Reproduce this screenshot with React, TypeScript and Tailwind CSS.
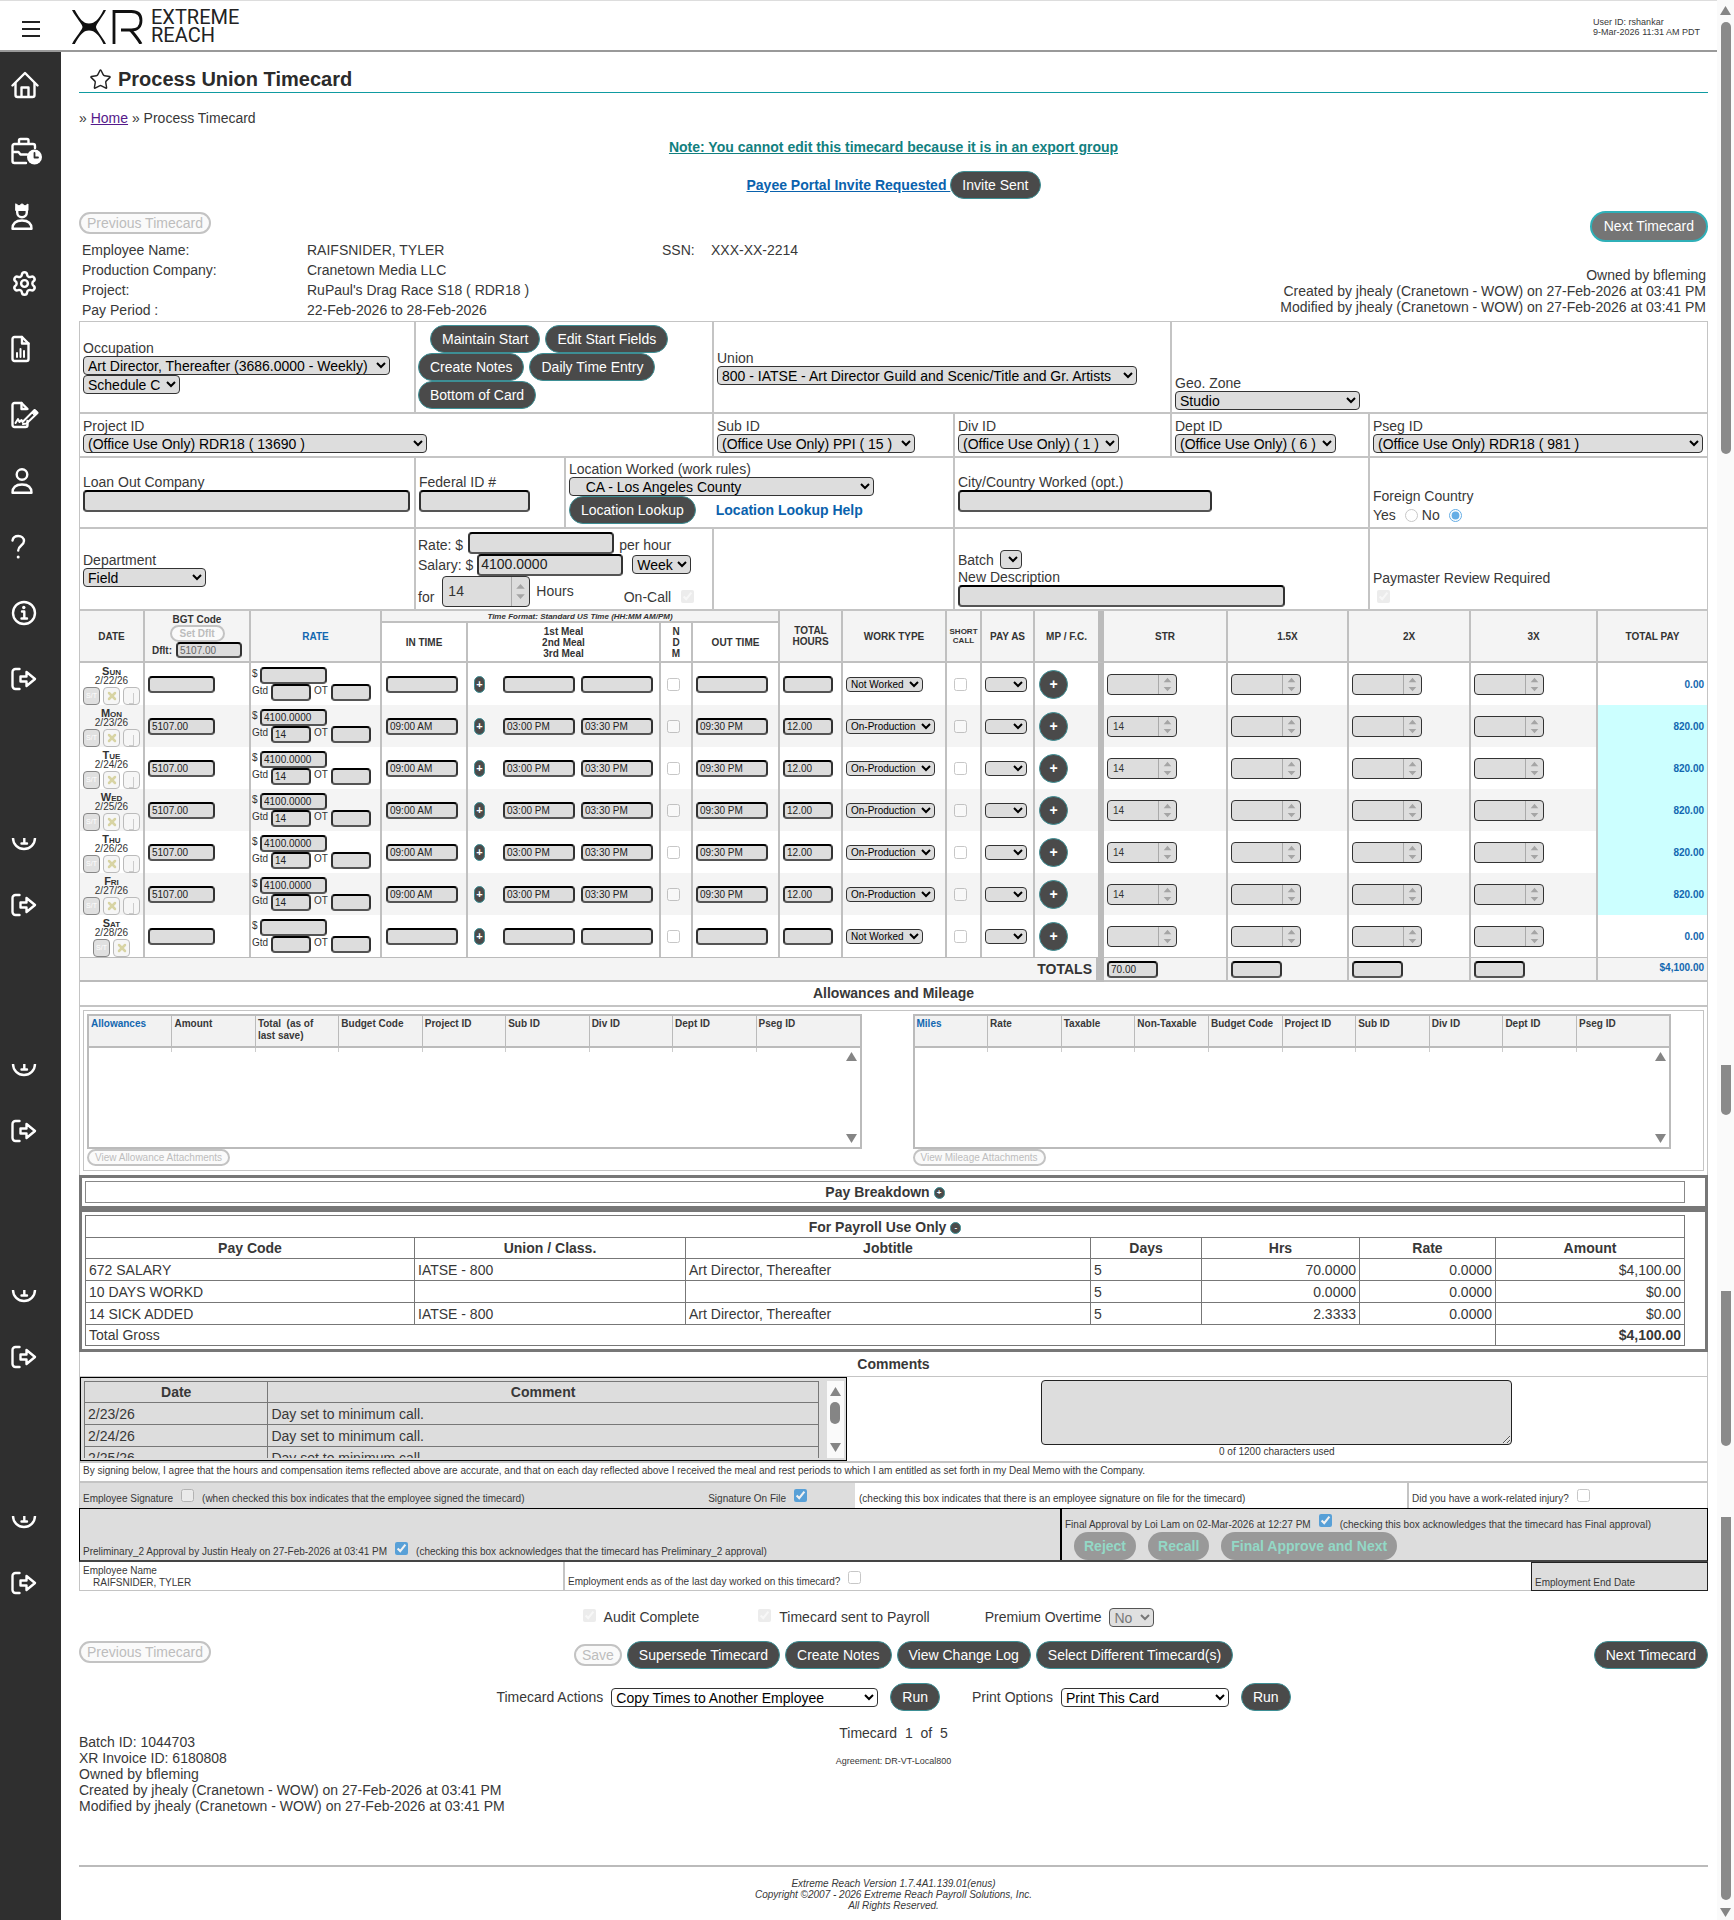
import type { ReactNode } from "react";
import { twMerge } from "tailwind-merge";
import { Settings, Star, X } from "lucide-react";

const days = [
  { name: "Sun", date: "2/22/26", worked: false },
  { name: "Mon", date: "2/23/26", worked: true },
  { name: "Tue", date: "2/24/26", worked: true },
  { name: "Wed", date: "2/25/26", worked: true },
  { name: "Thu", date: "2/26/26", worked: true },
  { name: "Fri", date: "2/27/26", worked: true },
  { name: "Sat", date: "2/28/26", worked: false },
];

const payRows = [
  ["672 SALARY", "IATSE - 800", "Art Director, Thereafter", "5", "70.0000", "0.0000", "$4,100.00"],
  ["10 DAYS WORKD", "", "", "5", "0.0000", "0.0000", "$0.00"],
  ["14 SICK ADDED", "IATSE - 800", "Art Director, Thereafter", "5", "2.3333", "0.0000", "$0.00"],
];

const comments = [
  { date: "2/23/26", text: "Day set to minimum call." },
  { date: "2/24/26", text: "Day set to minimum call." },
  { date: "2/25/26", text: "Day set to minimum call." },
];

const allowanceCols = [
  "Allowances",
  "Amount",
  "Total\u00a0 (as of\nlast save)",
  "Budget Code",
  "Project ID",
  "Sub ID",
  "Div ID",
  "Dept ID",
  "Pseg ID",
];

const mileageCols = [
  "Miles",
  "Rate",
  "Taxable",
  "Non-Taxable",
  "Budget Code",
  "Project ID",
  "Sub ID",
  "Div ID",
  "Dept ID",
  "Pseg ID",
];

/* ---------- icons ---------- */

function Icon({ children, width = 28 }: { children: ReactNode; width?: number }) {
  return (
    <svg
      width={width}
      height="28"
      viewBox={`0 0 ${width} 28`}
      fill="none"
      stroke="white"
      strokeWidth="2.4"
      strokeLinecap="round"
      strokeLinejoin="round"
      aria-hidden="true"
    >
      {children}
    </svg>
  );
}

function HomeIcon() {
  return (
    <Icon>
      <path d="M1.500 14.500 14 2l12.500 12.500" />
      <path d="M4.500 12.500v11.500a2 2 0 0 0 2 2h15a2 2 0 0 0 2-2V12.500" />
      <path d="M10.500 25.500v-9h7v9" />
    </Icon>
  );
}

function BriefcaseIcon() {
  return (
    <Icon width={32}>
      <path d="M24 11V9a2 2 0 0 0-2-2H3.500a2 2 0 0 0-2 2v15a2 2 0 0 0 2 2H15" />
      <path d="M8 6.500V3.500a1.500 1.500 0 0 1 1.500-1.500h6.500a1.500 1.500 0 0 1 1.500 1.500v3" />
      <path d="M2 15h5.500l2 2.500H16" />
      <circle cx="23.500" cy="20" r="7.500" fill="white" stroke="none" />
      <path d="M23.500 16v4.500h3.500" stroke="#2f2f2f" strokeWidth="1.800" />
    </Icon>
  );
}

function CrownUserIcon() {
  return (
    <Icon width={24}>
      <path d="M5 1l3 2 3-2.200 3 2.200 3-2v6.500H5z" fill="white" strokeWidth="1" />
      <path d="M6.200 6.500V9.500a4.800 4.800 0 0 0 9.600 0V6.500" />
      <path d="M1.500 25.800c0-5.500 3.500-8.300 9.500-8.300s9.500 2.800 9.500 8.300z" />
    </Icon>
  );
}

function ReportIcon() {
  return (
    <Icon width={24}>
      <path d="M1.500 4a2 2 0 0 1 2-2H11l6.500 6.500V24a2 2 0 0 1-2 2h-12a2 2 0 0 1-2-2z" />
      <path d="M11 2v6.500h6.500" />
      <path d="M6 22v-4M9.500 22v-8M13 22v-6" strokeWidth="2" />
    </Icon>
  );
}

function SignIcon() {
  return (
    <Icon width={30}>
      <path d="M16.500 20v4a2 2 0 0 1-2 2h-11a2 2 0 0 1-2-2V4a2 2 0 0 1 2-2h7l6 6" />
      <path d="M10.500 2v6h5" />
      <path d="M4.500 22l2.500-4 1.500 3 2-2 1 2 12-12 3 3-11 10.500-3.500.5" strokeWidth="2" />
      <path d="m21 11.500 3-3 3 3-3 3z" fill="white" strokeWidth="1" />
    </Icon>
  );
}

function UserIcon() {
  return (
    <Icon width={24}>
      <circle cx="11" cy="7.500" r="5.300" />
      <path d="M1.500 25.800c0-5.500 3.500-8.300 9.500-8.300s9.500 2.800 9.500 8.300z" />
    </Icon>
  );
}

function HelpIcon() {
  return (
    <Icon width={16}>
      <path d="M1.500 7.500C2 4.500 4.300 3 7.300 3c3.200 0 5.700 2 5.700 5 0 4.500-5.800 4.500-5.800 9.500" />
      <circle cx="7.200" cy="24" r="1.500" fill="white" stroke="none" />
    </Icon>
  );
}

function InfoIcon() {
  return (
    <Icon width={26}>
      <circle cx="13" cy="14" r="11" />
      <path d="M11 12.500h2.300V19M10.500 19.500h5.500" />
      <circle cx="12.800" cy="8.500" r="1.700" fill="white" stroke="none" />
    </Icon>
  );
}

function LogoutIcon() {
  return (
    <Icon width={28}>
      <path d="M8.500 4H4.500a3 3 0 0 0-3 3v14a3 3 0 0 0 3 3h4" />
      <path d="M9.500 11.500h6V7l8.500 7-8.500 7v-4.500h-6z" />
    </Icon>
  );
}

function Logo() {
  return (
    <div className="flex items-start gap-2">
      <svg className="mt-[2px]" width="71" height="34" viewBox="0 0 71 34" fill="none" stroke="#111" aria-label="XR">
        <path
          d="M0 0h2.800C8 9 11 13.500 17 13.500S27 9 31.500 0H34c-4 8-10 14-10 17s6 9 10 17h-2.500C27 25 23 20.500 17 20.500S8 25 2.800 34H0c4-8 10.500-14 10.500-17S4 8 0 0z"
          fill="#111"
          stroke="none"
        />
        <path d="M42 34V1.500h17.500c6 0 9.500 3 9.500 9s-3.500 9.500-9.500 9.500H49" strokeWidth="2.800" />
        <path d="M58.500 20c3 3.500 7 8 10.500 14" strokeWidth="3" />
      </svg>
      <div className="font-[Roboto,sans-serif] text-[20px] leading-[18px] text-[#222]">
        EXTREME
        <br />
        REACH
      </div>
    </div>
  );
}

/* ---------- controls ---------- */

function Button({ children, className }: { children: ReactNode; className?: string }) {
  return (
    <button
      type="button"
      className={twMerge(
        "inline-flex h-7 shrink-0 items-center justify-center rounded-full border border-[#3d8f95] bg-[#4a4a4a] px-[11px] whitespace-nowrap text-white",
        className
      )}
    >
      {children}
    </button>
  );
}

function DisabledButton({ children, className }: { children: ReactNode; className?: string }) {
  return (
    <button
      type="button"
      disabled
      className={twMerge(
        "inline-flex items-center justify-center rounded-full border-2 border-[#c3c3c3] bg-[#fafafa] whitespace-nowrap text-[#bdbdbd]",
        className
      )}
    >
      {children}
    </button>
  );
}

function Select({ label, id, value, className }: { label?: string; id?: string; value: string; className?: string }) {
  return (
    <select
      id={id}
      aria-label={label}
      className={twMerge("h-[19px] max-w-full rounded-[4px] border border-[#333] bg-[#ddd] text-black", className)}
    >
      <option>{value}</option>
    </select>
  );
}

function TextBox({ label, id, value = "", className }: { label?: string; id?: string; value?: string; className?: string }) {
  return (
    <input
      id={id}
      aria-label={label}
      type="text"
      defaultValue={value}
      className={twMerge(
        "max-w-full rounded-[4px] border-2 border-x-[#333] border-t-black border-b-[#555] bg-[#ddd] px-[2px] text-[#222]",
        className
      )}
    />
  );
}

function NumberBox({ label, value = "", className }: { label: string; value?: string; className?: string }) {
  return (
    <span className={twMerge("inline-flex overflow-hidden rounded-[4px] border border-[#333] bg-[#ddd]", className)}>
      <input aria-label={label} type="text" inputMode="numeric" defaultValue={value} className="w-0 min-w-0 flex-1 pl-[5px] text-[#333]" />
      <svg className="h-full w-[18px] border-l border-[#aaa]" viewBox="0 0 16 20" fill="#a5a5a5" aria-hidden="true">
        <path d="M8 3l4 4.500H4zM8 17l4-4.500H4z" />
      </svg>
    </span>
  );
}

function Check({ label, id, checked, disabled, className }: { label?: string; id?: string; checked?: boolean; disabled?: boolean; className?: string }) {
  return (
    <input
      type="checkbox"
      id={id}
      aria-label={label}
      defaultChecked={checked}
      disabled={disabled}
      className={twMerge("h-[13px] w-[13px] shrink-0 accent-[#0078d4]", checked && !disabled ? "opacity-60" : "opacity-40", className)}
    />
  );
}

function Arrow({ down }: { down?: boolean }) {
  return (
    <svg width="11" height="9" viewBox="0 0 11 9" fill="#858585" aria-hidden="true">
      <path d={down ? "M0 0h11L5.500 9z" : "M5.500 0 11 9H0z"} />
    </svg>
  );
}

/* ---------- layout ---------- */

function Sidebar() {
  const icons = [
    { label: "Home", icon: <HomeIcon /> },
    { label: "Time", icon: <BriefcaseIcon /> },
    { label: "Admin", icon: <CrownUserIcon /> },
    { label: "Settings", icon: <Settings size={27} color="white" strokeWidth={2.2} /> },
    { label: "Reports", icon: <ReportIcon /> },
    { label: "Sign", icon: <SignIcon /> },
    { label: "Profile", icon: <UserIcon /> },
    { label: "Help", icon: <HelpIcon /> },
    { label: "Info", icon: <InfoIcon /> },
    { label: "Log out", icon: <LogoutIcon /> },
  ];
  return (
    <nav className="w-[61px] shrink-0 bg-[#2f2f2f]">
      {icons.map((item) => (
        <a key={item.label} href="#" aria-label={item.label} className="flex h-[66px] items-center pl-[11px]">
          {item.icon}
        </a>
      ))}
      {[1, 2, 3, 4].map((n) => (
        <div key={n} className="pt-[126px]">
          <a href="#" aria-label="Info" className="mb-5 flex h-[14px] items-end overflow-hidden pl-[11px]">
            <InfoIcon />
          </a>
          <a href="#" aria-label="Log out" className="flex h-[66px] items-center pl-[11px]">
            <LogoutIcon />
          </a>
        </div>
      ))}
    </nav>
  );
}

function PageScroll() {
  return (
    <div className="flex w-[17px] shrink-0 flex-col items-center bg-[#fafafa] pt-[6px]" aria-hidden="true">
      <Arrow />
      <div className="mt-[7px] h-[432px] w-[10px] rounded-full bg-[#8a8a8a]" />
      <div className="mt-[611px] h-[50px] w-[10px] rounded-b-full bg-[#8a8a8a]" />
      <div className="mt-[176px] h-[155px] w-[10px] rounded-b-full bg-[#8a8a8a]" />
      <div className="mt-[71px] mb-2 h-[383px] w-[10px] rounded-b-full bg-[#8a8a8a]" />
      <Arrow down />
    </div>
  );
}

function Cell({ children, className }: { children?: ReactNode; className?: string }) {
  return (
    <div className={twMerge("flex min-w-0 flex-col items-start justify-center border-b-2 border-[#c4c4c4] px-[3px] leading-4", className)}>
      {children}
    </div>
  );
}

function TimecardForm() {
  return (
    <form className="grid grid-cols-[336fr_150fr_148fr_241fr_217fr_198fr_337fr] border-x border-t border-[#c4c4c4]">
      <Cell className="h-[92px] border-r-2">
        <label htmlFor="occupation">Occupation</label>
        <Select id="occupation" value="Art Director, Thereafter (3686.0000 - Weekly)" className="w-[307px]" />
        <Select label="Schedule" value="Schedule C" className="w-[97px]" />
      </Cell>
      <Cell className="col-span-2 border-r-2 pl-[2px]">
        <div className="flex gap-[5px] pl-3">
          <Button>Maintain Start</Button>
          <Button>Edit Start Fields</Button>
        </div>
        <div className="flex gap-[5px]">
          <Button>Create Notes</Button>
          <Button>Daily Time Entry</Button>
        </div>
        <Button>Bottom of Card</Button>
      </Cell>
      <Cell className="col-span-2 border-r-2">
        <label htmlFor="union">Union</label>
        <Select id="union" value="800 - IATSE - Art Director Guild and Scenic/Title and Gr. Artists" className="w-[420px]" />
      </Cell>
      <Cell className="col-span-2 justify-end pb-[2px]">
        <label htmlFor="geo">Geo. Zone</label>
        <Select id="geo" value="Studio" className="w-[185px]" />
      </Cell>

      <Cell className="col-span-3 h-11 border-r-2">
        <label htmlFor="project">Project ID</label>
        <Select id="project" value="(Office Use Only) RDR18 ( 13690 )" className="w-[344px]" />
      </Cell>
      <Cell className="border-r-2">
        <label htmlFor="sub">Sub ID</label>
        <Select id="sub" value="(Office Use Only) PPI ( 15 )" className="w-[198px]" />
      </Cell>
      <Cell className="border-r-2">
        <label htmlFor="div">Div ID</label>
        <Select id="div" value="(Office Use Only) ( 1 )" className="w-[161px]" />
      </Cell>
      <Cell className="border-r-2">
        <label htmlFor="dept-id">Dept ID</label>
        <Select id="dept-id" value="(Office Use Only) ( 6 )" className="w-[161px]" />
      </Cell>
      <Cell>
        <label htmlFor="pseg">Pseg ID</label>
        <Select id="pseg" value="(Office Use Only) RDR18 ( 981 )" className="w-[330px]" />
      </Cell>

      <Cell className="h-[71px] border-r-2">
        <label htmlFor="loan">Loan Out Company</label>
        <TextBox id="loan" className="h-[22px] w-[327px]" />
      </Cell>
      <Cell className="border-r-2">
        <label htmlFor="fed">Federal ID #</label>
        <TextBox id="fed" className="h-[22px] w-[111px]" />
      </Cell>
      <Cell className="col-span-2 border-r-2">
        <label htmlFor="location">Location Worked (work rules)</label>
        <Select id="location" value={"\u00a0\u00a0\u00a0CA - Los Angeles County"} className="w-[305px]" />
        <div className="flex items-center gap-5">
          <Button>Location Lookup</Button>
          <a href="#" className="font-bold text-[#0a62ad]">
            Location Lookup Help
          </a>
        </div>
      </Cell>
      <Cell className="col-span-2 border-r-2">
        <label htmlFor="city">City/Country Worked (opt.)</label>
        <TextBox id="city" className="h-[22px] w-[254px]" />
      </Cell>
      <Cell className="justify-end gap-[3px] pb-1">
        <span>Foreign Country</span>
        <div className="flex items-center">
          <label htmlFor="fc-yes">Yes</label>
          <input id="fc-yes" type="radio" name="foreign" className="mr-1 ml-[9px] h-[13px] w-[13px] opacity-40" />
          <label htmlFor="fc-no">No</label>
          <input
            id="fc-no"
            type="radio"
            name="foreign"
            defaultChecked
            className="ml-[9px] h-[13px] w-[13px] accent-[#0078d4] opacity-60"
          />
        </div>
      </Cell>

      <Cell className="h-[82px] border-r-2">
        <label htmlFor="department">Department</label>
        <Select id="department" value="Field" className="w-[123px]" />
      </Cell>
      <Cell className="col-span-2 border-r-2 pl-[2px]">
        <div className="flex items-end gap-[5px]">
          <label htmlFor="rate" className="pb-px">Rate: $</label>
          <TextBox id="rate" className="h-[22px] w-[146px]" />
          <span className="pb-px">per hour</span>
        </div>
        <div className="flex items-center gap-1">
          <label htmlFor="salary">Salary: $</label>
          <TextBox id="salary" value="4100.0000" className="h-[22px] w-[146px] pb-[2px]" />
          <Select label="Salary period" value="Week" className="ml-[5px] w-[59px]" />
        </div>
        <div className="flex items-center gap-[6px]">
          <span className="self-end pb-[2px]">for</span>
          <NumberBox label="Hours" value="14" className="ml-[2px] h-[31px] w-[88px]" />
          <span>Hours</span>
          <label htmlFor="on-call" className="ml-[44px] self-end pb-[2px]">
            On-Call
          </label>
          <Check id="on-call" checked disabled className="mb-1 ml-1 self-end" />
        </div>
      </Cell>
      <Cell className="border-r-2" />
      <Cell className="col-span-2 justify-end border-r-2 pb-[2px]">
        <div className="flex items-center gap-[6px]">
          <label htmlFor="batch">Batch</label>
          <Select id="batch" value="" className="w-[22px]" />
        </div>
        <label htmlFor="new-desc">New Description</label>
        <TextBox id="new-desc" className="h-[22px] w-[327px]" />
      </Cell>
      <Cell className="justify-end gap-1 pb-[6px]">
        <label htmlFor="paymaster">Paymaster Review Required</label>
        <Check id="paymaster" checked disabled className="ml-1" />
      </Cell>
    </form>
  );
}

const smallBox = "h-[17px] text-[10px]";

function DayIcons({ short }: { short: boolean }) {
  return (
    <div className="flex h-[18px] justify-center gap-[3px]">
      <button type="button" disabled className="w-[17px] rounded-[4px] border border-[#888] bg-[#e0e0e0] text-[7px] text-white">
        S/T
      </button>
      <button
        type="button"
        disabled
        aria-label="Clear day"
        className="flex w-[17px] items-center justify-center rounded-[4px] border border-[#bbb] bg-[#f6f6f6]"
      >
        <X size={12} color="#d8d4a4" strokeWidth={5} />
      </button>
      {!short && (
        <button
          type="button"
          disabled
          aria-label="Copy day"
          className="flex w-[17px] items-end justify-center rounded-[4px] border border-[#bbb] bg-[#f6f6f6]"
        >
          <span className="h-[11px] w-[5px] border-r border-b border-[#ccc]" />
        </button>
      )}
    </div>
  );
}

function Timesheet() {
  const head = "border-r-2 border-b-2 border-[#c0c0c0] p-0 text-[10px] font-bold leading-[11px]";
  const cell = "border-r-2 border-[#c0c0c0] p-0";
  const gray = "bg-[#f4f4f4]";
  return (
    <table className="w-full table-fixed border-separate border-spacing-0 border-x border-[#c4c4c4] text-[10px] text-[#333]">
      <colgroup>
        <col className="w-[65px]" />
        <col className="w-[106px]" />
        <col className="w-[131px]" />
        <col className="w-[86px]" />
        <col className="w-[193px]" />
        <col className="w-[32px]" />
        <col className="w-[87px]" />
        <col className="w-[63px]" />
        <col className="w-[104px]" />
        <col className="w-[35px]" />
        <col className="w-[53px]" />
        <col className="w-[69px]" />
        <col className="w-[124px]" />
        <col className="w-[121px]" />
        <col className="w-[122px]" />
        <col className="w-[127px]" />
        <col className="w-[109px]" />
      </colgroup>
      <thead>
        <tr>
          <th rowSpan={2} className={twMerge(head, gray)}>DATE</th>
          <th rowSpan={2} className={twMerge(head, gray)}>
            <div>BGT Code</div>
            <DisabledButton className="flex mx-auto h-[17px] w-[55px] text-[10px]">Set Dflt</DisabledButton>
            <div className="flex items-center justify-center gap-1">
              <label htmlFor="dflt">Dflt:</label>
              <TextBox id="dflt" value="5107.00" className="h-[16px] w-[66px] font-normal text-[#666]" />
            </div>
          </th>
          <th rowSpan={2} className={twMerge(head, gray, "text-[#1267b0]")}>RATE</th>
          <th colSpan={4} className={twMerge(head, gray, "h-[12px] text-[8px] leading-[9px] italic")}>
            Time Format: Standard US Time (HH:MM AM/PM)
          </th>
          <th rowSpan={2} className={twMerge(head, gray)}>TOTAL HOURS</th>
          <th rowSpan={2} className={twMerge(head, gray)}>WORK TYPE</th>
          <th rowSpan={2} className={twMerge(head, gray, "text-[8px] leading-[9px]")}>SHORT CALL</th>
          <th rowSpan={2} className={twMerge(head, gray)}>PAY AS</th>
          <th rowSpan={2} className={twMerge(head, gray, "border-r-[6px] border-r-[#bbb]")}>MP / F.C.</th>
          <th rowSpan={2} className={twMerge(head, gray)}>STR</th>
          <th rowSpan={2} className={twMerge(head, gray)}>1.5X</th>
          <th rowSpan={2} className={twMerge(head, gray)}>2X</th>
          <th rowSpan={2} className={twMerge(head, gray)}>3X</th>
          <th rowSpan={2} className={twMerge(head, gray, "border-r-0")}>TOTAL PAY</th>
        </tr>
        <tr>
          <th className={twMerge(head, "h-[40px]")}>IN TIME</th>
          <th className={head}>
            1st Meal
            <br />
            2nd Meal
            <br />
            3rd Meal
          </th>
          <th className={head}>
            N<br />D<br />M
          </th>
          <th className={head}>OUT TIME</th>
        </tr>
      </thead>
      <tbody>
        {days.map((day, i) => (
          <tr key={day.name} className={i % 2 === 1 ? "bg-[#f4f4f4]" : "bg-white"}>
            <td className={twMerge(cell, "h-[42px] text-center leading-[10px]")}>
              <div className="pt-[2px] text-[11px] leading-[10px] font-bold [font-variant:small-caps]">{day.name}</div>
              <div className="pb-px">{day.date}</div>
              <DayIcons short={day.name === "Sat"} />
            </td>
            <td className={twMerge(cell, "pl-[3px]")}>
              <TextBox label={`${day.name} budget code`} value={day.worked ? "5107.00" : ""} className={twMerge(smallBox, "w-[67px]")} />
            </td>
            <td className={twMerge(cell, "pl-px leading-[14px]")}>
              <div className="flex">
                <span className="w-2">$</span>
                <TextBox label={`${day.name} rate`} value={day.worked ? "4100.0000" : ""} className={twMerge(smallBox, "w-[67px]")} />
              </div>
              <div className="flex">
                <span className="w-[19px]">Gtd</span>
                <TextBox label={`${day.name} guaranteed`} value={day.worked ? "14" : ""} className={twMerge(smallBox, "w-10")} />
                <span className="w-5 pl-[3px]">OT</span>
                <TextBox label={`${day.name} overtime`} className={twMerge(smallBox, "w-10")} />
              </div>
            </td>
            <td className={twMerge(cell, "pl-1")}>
              <TextBox label={`${day.name} in time`} value={day.worked ? "09:00 AM" : ""} className={twMerge(smallBox, "w-[72px]")} />
            </td>
            <td className={cell}>
              <div className="flex items-center pl-[6px]">
                <button
                  type="button"
                  aria-label="Add meal"
                  className="mr-[18px] h-[17px] w-[11px] rounded-full border border-[#3d8f95] bg-[#4a4a4a] text-[11px] leading-[13px] font-bold text-white"
                >
                  +
                </button>
                <TextBox label={`${day.name} meal out`} value={day.worked ? "03:00 PM" : ""} className={twMerge(smallBox, "mr-[6px] w-[72px]")} />
                <TextBox label={`${day.name} meal in`} value={day.worked ? "03:30 PM" : ""} className={twMerge(smallBox, "w-[72px]")} />
              </div>
            </td>
            <td className={cell}>
              <Check label={`${day.name} NDM`} className="ml-[6px] block" />
            </td>
            <td className={twMerge(cell, "pl-[3px]")}>
              <TextBox label={`${day.name} out time`} value={day.worked ? "09:30 PM" : ""} className={twMerge(smallBox, "w-[72px]")} />
            </td>
            <td className={twMerge(cell, "pl-[3px]")}>
              <TextBox label={`${day.name} total hours`} value={day.worked ? "12.00" : ""} className={twMerge(smallBox, "w-[50px]")} />
            </td>
            <td className={twMerge(cell, "pl-[3px]")}>
              <Select
                label={`${day.name} work type`}
                value={day.worked ? "On-Production" : "Not Worked"}
                className={twMerge("h-[15px] text-[10px]", day.worked ? "w-[89px]" : "w-[77px]")}
              />
            </td>
            <td className={cell}>
              <Check label={`${day.name} short call`} className="ml-[7px] block" />
            </td>
            <td className={twMerge(cell, "pl-[3px]")}>
              <Select label={`${day.name} pay as`} value="" className="h-[15px] w-[42px] text-[10px]" />
            </td>
            <td className={twMerge(cell, "border-r-[6px] border-r-[#bbb] pl-1")}>
              <button
                type="button"
                aria-label="Add penalty"
                className="block h-[29px] w-[29px] rounded-full border border-[#3d8f95] bg-[#4a4a4a] text-[14px] leading-[26px] font-bold text-white"
              >
                +
              </button>
            </td>
            {["STR", "1.5X", "2X", "3X"].map((rate) => (
              <td key={rate} className={twMerge(cell, "pl-[3px]")}>
                <NumberBox
                  label={`${day.name} ${rate}`}
                  value={day.worked && rate === "STR" ? "14" : ""}
                  className="flex h-[21px] w-[70px]"
                />
              </td>
            ))}
            <td className={twMerge("pr-[3px] text-right font-bold text-[#1267b0]", day.worked && "bg-[#ccffff]")}>
              {day.worked ? "820.00" : "0.00"}
            </td>
          </tr>
        ))}
      </tbody>
      <tfoot>
        <tr className="bg-[#f4f4f4]">
          <td
            colSpan={12}
            className="h-[25px] border-t border-r-[8px] border-b-2 border-[#bbb] pr-1 text-right text-[14px] leading-4 font-bold"
          >
            TOTALS
          </td>
          {["70.00", "", "", ""].map((total, i) => (
            <td key={i} className="border-t border-r-2 border-b-2 border-[#c0c0c0] pl-[3px]">
              <TextBox label="Total" value={total} className="block h-[17px] w-[51px] text-[10px]" />
            </td>
          ))}
          <td className="border-t border-b-2 border-[#c0c0c0] pr-[3px] pb-1 text-right font-bold text-[#1267b0]">$4,100.00</td>
        </tr>
      </tfoot>
    </table>
  );
}

function ScrollTable({ columns, className, button }: { columns: string[]; className: string; button: string }) {
  return (
    <div className={className}>
      <div className="flex h-[135px] flex-col border-2 border-[#bbb]">
        <table className="w-full table-fixed border-separate border-spacing-0 text-[10px] leading-3">
          <thead>
            <tr>
              {columns.map((col, i) => {
                const last = i === columns.length - 1;
                return (
                  <th
                    key={col}
                    className={twMerge(
                      "h-[32px] border-b-2 border-[#bbb] bg-[#f2f2f2] p-0 pt-[2px] pl-[2px] text-left align-top whitespace-pre-line",
                      last ? (columns.length === 9 ? "w-[103px]" : "w-[92px]") : "border-r",
                      i === 0 && "text-[#1267b0]"
                    )}
                  >
                    {col}
                  </th>
                );
              })}
            </tr>
          </thead>
          <tbody>
            <tr>
              {columns.map((col, i) => (
                <td key={col} className={twMerge("h-1 p-0", i < columns.length - 1 && "border-r border-[#ccc]")} />
              ))}
            </tr>
          </tbody>
        </table>
        <div className="flex w-[17px] flex-1 flex-col items-center justify-between self-end pb-1">
          <Arrow />
          <Arrow down />
        </div>
      </div>
      <DisabledButton className="flex h-[17px] px-[6px] text-[10px] leading-3">{button}</DisabledButton>
    </div>
  );
}

function PayrollSection() {
  const th = "border-r border-b border-[#777] p-0";
  const td = "border-r border-b border-[#777] px-[3px] py-0";
  const toggle =
    "mt-[2px] flex h-3 w-[11px] items-center justify-center rounded-full border border-[#3d8f95] bg-[#4a4a4a] text-[8px] leading-none text-white";
  return (
    <>
      <div className="border-[3px] border-[#777] py-[3px] pr-5 pl-[3px]">
        <h2 className="flex h-[22px] items-center justify-center gap-1 border border-[#888] font-bold">
          Pay Breakdown
          <button type="button" aria-label="Expand pay breakdown" className={toggle}>
            +
          </button>
        </h2>
      </div>
      <div className="border-[3px] border-[#777] py-[3px] pr-5 pl-[3px]">
        <table className="w-full table-fixed border-separate border-spacing-0 border-t border-l border-[#777] leading-4">
          <colgroup>
            <col className="w-[329px]" />
            <col className="w-[271px]" />
            <col className="w-[405px]" />
            <col className="w-[111px]" />
            <col className="w-[158px]" />
            <col className="w-[136px]" />
            <col className="w-[189px]" />
          </colgroup>
          <thead>
            <tr>
              <th colSpan={7} className={twMerge(th, "h-[22px]")}>
                <span className="flex items-center justify-center gap-1">
                  For Payroll Use Only
                  <button type="button" aria-label="Collapse payroll section" className={toggle}>
                    -
                  </button>
                </span>
              </th>
            </tr>
            <tr>
              {["Pay Code", "Union / Class.", "Jobtitle", "Days", "Hrs", "Rate", "Amount"].map((h) => (
                <th key={h} className={twMerge(th, "h-[21px]")}>
                  {h}
                </th>
              ))}
            </tr>
          </thead>
          <tbody>
            {payRows.map((row) => (
              <tr key={row[0]}>
                {row.map((value, i) => (
                  <td key={i} className={twMerge(td, "h-[22px]", i > 3 && "text-right")}>
                    {value}
                  </td>
                ))}
              </tr>
            ))}
            <tr>
              <td colSpan={6} className={twMerge(td, "h-[21px]")}>
                Total Gross
              </td>
              <td className={twMerge(td, "text-right font-bold")}>$4,100.00</td>
            </tr>
          </tbody>
        </table>
      </div>
    </>
  );
}

function CommentsSection() {
  return (
    <div className="flex h-[86px] border-b-2 border-[#c4c4c4]">
      <div className="flex flex-[763] overflow-hidden border border-black bg-[#ddd] pt-[3px] pr-[2px] pb-[2px] pl-[3px]">
        <div className="flex-1 overflow-hidden">
          <table className="w-full table-fixed border-separate border-spacing-0 border-t border-l border-[#777] leading-4">
            <thead>
              <tr>
                <th className="h-[21px] w-1/4 border-r border-b border-[#777] p-0">Date</th>
                <th className="border-r border-b border-[#777] p-0">Comment</th>
              </tr>
            </thead>
            <tbody>
              {comments.map((c) => (
                <tr key={c.date}>
                  <td className="h-[22px] border-r border-b border-[#777] px-[3px] py-0">{c.date}</td>
                  <td className="border-r border-b border-[#777] px-[3px] py-0">{c.text}</td>
                </tr>
              ))}
            </tbody>
          </table>
        </div>
        <div className="ml-2 flex w-[17px] flex-col items-center bg-[#fafafa] py-[6px]" aria-hidden="true">
          <Arrow />
          <div className="mt-[6px] mb-auto h-[22px] w-[10px] rounded-full bg-[#858585]" />
          <Arrow down />
        </div>
      </div>
      <div className="flex flex-[864] flex-col items-center pt-[3px] text-[10px] leading-[14px]">
        <textarea aria-label="New comment" className="h-[65px] w-[471px] max-w-full rounded-[4px] border border-[#222] bg-[#ddd]" />
        <span>0 of 1200 characters used</span>
      </div>
    </div>
  );
}

function Approvals() {
  const gated = "h-7 rounded-full bg-[#999] px-[10px] text-[14px] font-bold text-[#93d8c6]";
  return (
    <div className="text-[10px] leading-3">
      <p className="h-5 border-x border-b-2 border-[#c4c4c4] pt-[2px] pl-[3px]">
        By signing below, I agree that the hours and compensation items reflected above are accurate, and that on each day reflected
        above I received the meal and rest periods to which I am entitled as set forth in my Deal Memo with the Company.
      </p>
      <div className="flex h-[25px] border-x border-[#c4c4c4]">
        <div className="flex w-[775px] items-center gap-2 bg-[#ddd] pl-[3px]">
          <label htmlFor="emp-sig" className="pt-[6px]">Employee Signature</label>
          <Check id="emp-sig" />
          <span className="pt-[6px]">(when checked this box indicates that the employee signed the timecard)</span>
          <label htmlFor="on-file" className="ml-auto pt-[6px]">Signature On File</label>
          <Check id="on-file" checked className="mr-12" />
        </div>
        <div className="flex flex-1 items-center border-r-2 border-[#c4c4c4] pt-[7px] pl-1">
          (checking this box indicates that there is an employee signature on file for the timecard)
        </div>
        <div className="flex w-[298px] items-center gap-2 pl-[3px]">
          <label htmlFor="injury" className="pt-[6px]">Did you have a work-related injury?</label>
          <Check id="injury" />
        </div>
      </div>
      <div className="flex h-[54px] border border-b-2 border-black border-b-[#444] bg-[#ddd]">
        <div className="flex flex-1 items-end gap-2 border-r-2 border-black pl-[3px]">
          <label htmlFor="prelim" className="pb-[2px]">Preliminary_2 Approval by Justin Healy on 27-Feb-2026 at 03:41 PM</label>
          <Check id="prelim" checked className="mb-[5px]" />
          <span className="pb-[2px]">(checking this box acknowledges that the timecard has Preliminary_2 approval)</span>
        </div>
        <div className="w-[645px] pt-[5px] pl-[3px]">
          <div className="flex h-[18px] items-start gap-2">
            <label htmlFor="final" className="pt-[5px]">Final Approval by Loi Lam on 02-Mar-2026 at 12:27 PM</label>
            <Check id="final" checked />
            <span className="pt-[5px]">(checking this box acknowledges that the timecard has Final approval)</span>
          </div>
          <div className="flex gap-3 pl-[9px]">
            <button type="button" className={gated}>Reject</button>
            <button type="button" className={gated}>Recall</button>
            <button type="button" className={gated}>Final Approve and Next</button>
          </div>
        </div>
      </div>
      <div className="flex h-[29px]">
        <div className="w-[486px] border-r-2 border-b border-l border-[#c4c4c4] pt-[3px] pl-[3px]">
          Employee Name
          <div className="pl-[10px]">RAIFSNIDER, TYLER</div>
        </div>
        <div className="flex flex-1 items-end gap-2 border-b border-[#c4c4c4] pb-[2px] pl-[3px]">
          <label htmlFor="ends">Employment ends as of the last day worked on this timecard?</label>
          <Check id="ends" className="mb-1" />
        </div>
        <div className="flex w-[177px] items-end border border-[#222] bg-[#ddd] pb-px pl-[3px]">Employment End Date</div>
      </div>
    </div>
  );
}

function BottomActions() {
  return (
    <>
      <div className="mt-4 flex h-5 items-center justify-center pr-[50px] leading-4">
        <Check id="audit" checked disabled className="mr-2 mb-1" />
        <label htmlFor="audit" className="mr-[59px]">Audit Complete</label>
        <Check id="sent" checked disabled className="mr-2 mb-1" />
        <label htmlFor="sent" className="mr-[55px]">Timecard sent to Payroll</label>
        <label htmlFor="premium" className="mr-2">Premium Overtime</label>
        <select id="premium" disabled className="h-[19px] w-[45px] rounded-[4px] border border-[#555] bg-[#e0e0e0] text-[#777]">
          <option>No</option>
        </select>
      </div>
      <div className="mt-[14px] grid grid-cols-[1fr_auto_1fr] items-start">
        <div>
          <DisabledButton className="h-[22px] px-[6px]">Previous Timecard</DisabledButton>
        </div>
        <div className="flex items-center gap-[5px] pl-5">
          <DisabledButton className="h-[22px] px-[6px]">Save</DisabledButton>
          <Button>Supersede Timecard</Button>
          <Button>Create Notes</Button>
          <Button>View Change Log</Button>
          <Button>Select Different Timecard(s)</Button>
        </div>
        <div className="text-right">
          <Button>Next Timecard</Button>
        </div>
      </div>
      <div className="mt-[14px] flex items-center justify-center leading-4">
        <label htmlFor="actions" className="mr-2">Timecard Actions</label>
        <Select id="actions" value="Copy Times to Another Employee" className="mr-3 w-[267px] bg-white" />
        <Button>Run</Button>
        <label htmlFor="print" className="mr-2 ml-8">Print Options</label>
        <Select id="print" value="Print This Card" className="mr-3 w-[168px] bg-white" />
        <Button>Run</Button>
      </div>
      <div className="mt-[14px] grid grid-cols-[1fr_auto_1fr] leading-4">
        <div className="pt-[9px]">
          Batch ID: 1044703
          <br />
          XR Invoice ID: 6180808
          <br />
          Owned by bfleming
          <br />
          Created by jhealy (Cranetown - WOW) on 27-Feb-2026 at 03:41 PM
          <br />
          Modified by jhealy (Cranetown - WOW) on 27-Feb-2026 at 03:41 PM
        </div>
        <div className="text-center">
          Timecard&nbsp; 1 &nbsp;of&nbsp; 5
          <div className="mt-3 text-[9px]">Agreement: DR-VT-Local800</div>
        </div>
      </div>
    </>
  );
}

export default function App() {
  return (
    <div className="flex min-h-screen bg-white font-['Liberation_Sans',Arial,sans-serif] text-[14px] text-[#383838]">
      <div className="flex min-w-0 flex-1 flex-col">
        <header className="flex h-[52px] shrink-0 items-start border-t border-b-2 border-t-[#ddd] border-b-[#999]">
          <button type="button" aria-label="Menu" className="mt-5 mr-[32px] ml-[22px] flex w-[18px] flex-col gap-[5px]">
            <span className="h-[2px] bg-[#222]" />
            <span className="h-[2px] bg-[#222]" />
            <span className="h-[2px] bg-[#222]" />
          </button>
          <div className="pt-[7px]">
            <Logo />
          </div>
          <div className="mt-4 mr-[17px] ml-auto text-[9px] leading-[10px]">
            User ID: rshankar
            <br />
            9-Mar-2026 11:31 AM PDT
          </div>
        </header>
        <div className="flex flex-1">
          <Sidebar />
          <main className="min-w-0 flex-1 pr-[9px] pl-[18px]">
            <div className="flex h-[41px] items-center border-b border-[#0f9ba1] pt-[14px] pl-[10px]">
              <Star size={23} strokeWidth={1.5} color="#222" />
              <h1 className="ml-[6px] text-[20px] leading-6 font-bold text-[#2b2b2b]">Process Union Timecard</h1>
            </div>
            <div className="mt-[17px] leading-4">
              »{" "}
              <a href="#" className="text-[#551a8b] underline">
                Home
              </a>{" "}
              » Process Timecard
            </div>
            <p className="mt-[13px] text-center leading-4 font-bold text-[#12807f] underline">
              Note: You cannot edit this timecard because it is in an export group
            </p>
            <div className="mt-4 flex items-center justify-center">
              <a href="#" className="font-bold whitespace-pre text-[#0a62ad] underline">
                {"Payee Portal Invite Requested "}
              </a>
              <Button>Invite Sent</Button>
            </div>
            <div className="mt-3 flex h-[29px] items-start justify-between">
              <DisabledButton className="mt-px h-[22px] px-[6px]">Previous Timecard</DisabledButton>
              <button type="button" className="h-[31px] rounded-full border-2 border-[#2fb0b8] bg-[#757575] px-[12px] text-white">
                Next Timecard
              </button>
            </div>
            <div className="flex justify-between pr-[2px] pl-[3px]">
              <dl className="grid grid-cols-[225px_355px_49px_auto] leading-5">
                <dt>Employee Name:</dt>
                <dd>RAIFSNIDER, TYLER</dd>
                <dt>SSN:</dt>
                <dd>XXX-XX-2214</dd>
                <dt>Production Company:</dt>
                <dd className="col-span-3">Cranetown Media LLC</dd>
                <dt>Project:</dt>
                <dd className="col-span-3">RuPaul's Drag Race S18 ( RDR18 )</dd>
                <dt>Pay Period :</dt>
                <dd className="col-span-3">22-Feb-2026 to 28-Feb-2026</dd>
              </dl>
              <div className="self-end pb-[5px] text-right leading-4">
                Owned by bfleming
                <br />
                Created by jhealy (Cranetown - WOW) on 27-Feb-2026 at 03:41 PM
                <br />
                Modified by jhealy (Cranetown - WOW) on 27-Feb-2026 at 03:41 PM
              </div>
            </div>

            <div className="mt-px">
              <TimecardForm />
              <Timesheet />
              <h2 className="h-[25px] border-x border-b-2 border-[#c4c4c4] pt-px text-center leading-5 font-bold">
                Allowances and Mileage
              </h2>
              <div className="border-x border-[#c4c4c4] p-[3px] pb-1">
                <div className="flex gap-[51px] border border-[#c4c4c4] pt-[3px] pr-8 pb-1 pl-[3px]">
                  <ScrollTable columns={allowanceCols} className="flex-[775]" button="View Allowance Attachments" />
                  <ScrollTable columns={mileageCols} className="flex-[759]" button="View Mileage Attachments" />
                </div>
              </div>
              <PayrollSection />
              <div className="border-x border-[#c4c4c4]">
                <h2 className="h-[25px] border-b border-[#c4c4c4] pt-[2px] text-center leading-5 font-bold">Comments</h2>
                <CommentsSection />
              </div>
              <Approvals />
            </div>

            <BottomActions />

            <footer className="mt-[51px] border-t-2 border-[#bbb] pt-[11px] text-center text-[10px] leading-[11px] italic">
              Extreme Reach Version 1.7.4A1.139.01(enus)
              <br />
              Copyright ©2007 - 2026 Extreme Reach Payroll Solutions, Inc.
              <br />
              All Rights Reserved.
            </footer>
          </main>
        </div>
      </div>
      <PageScroll />
    </div>
  );
}
